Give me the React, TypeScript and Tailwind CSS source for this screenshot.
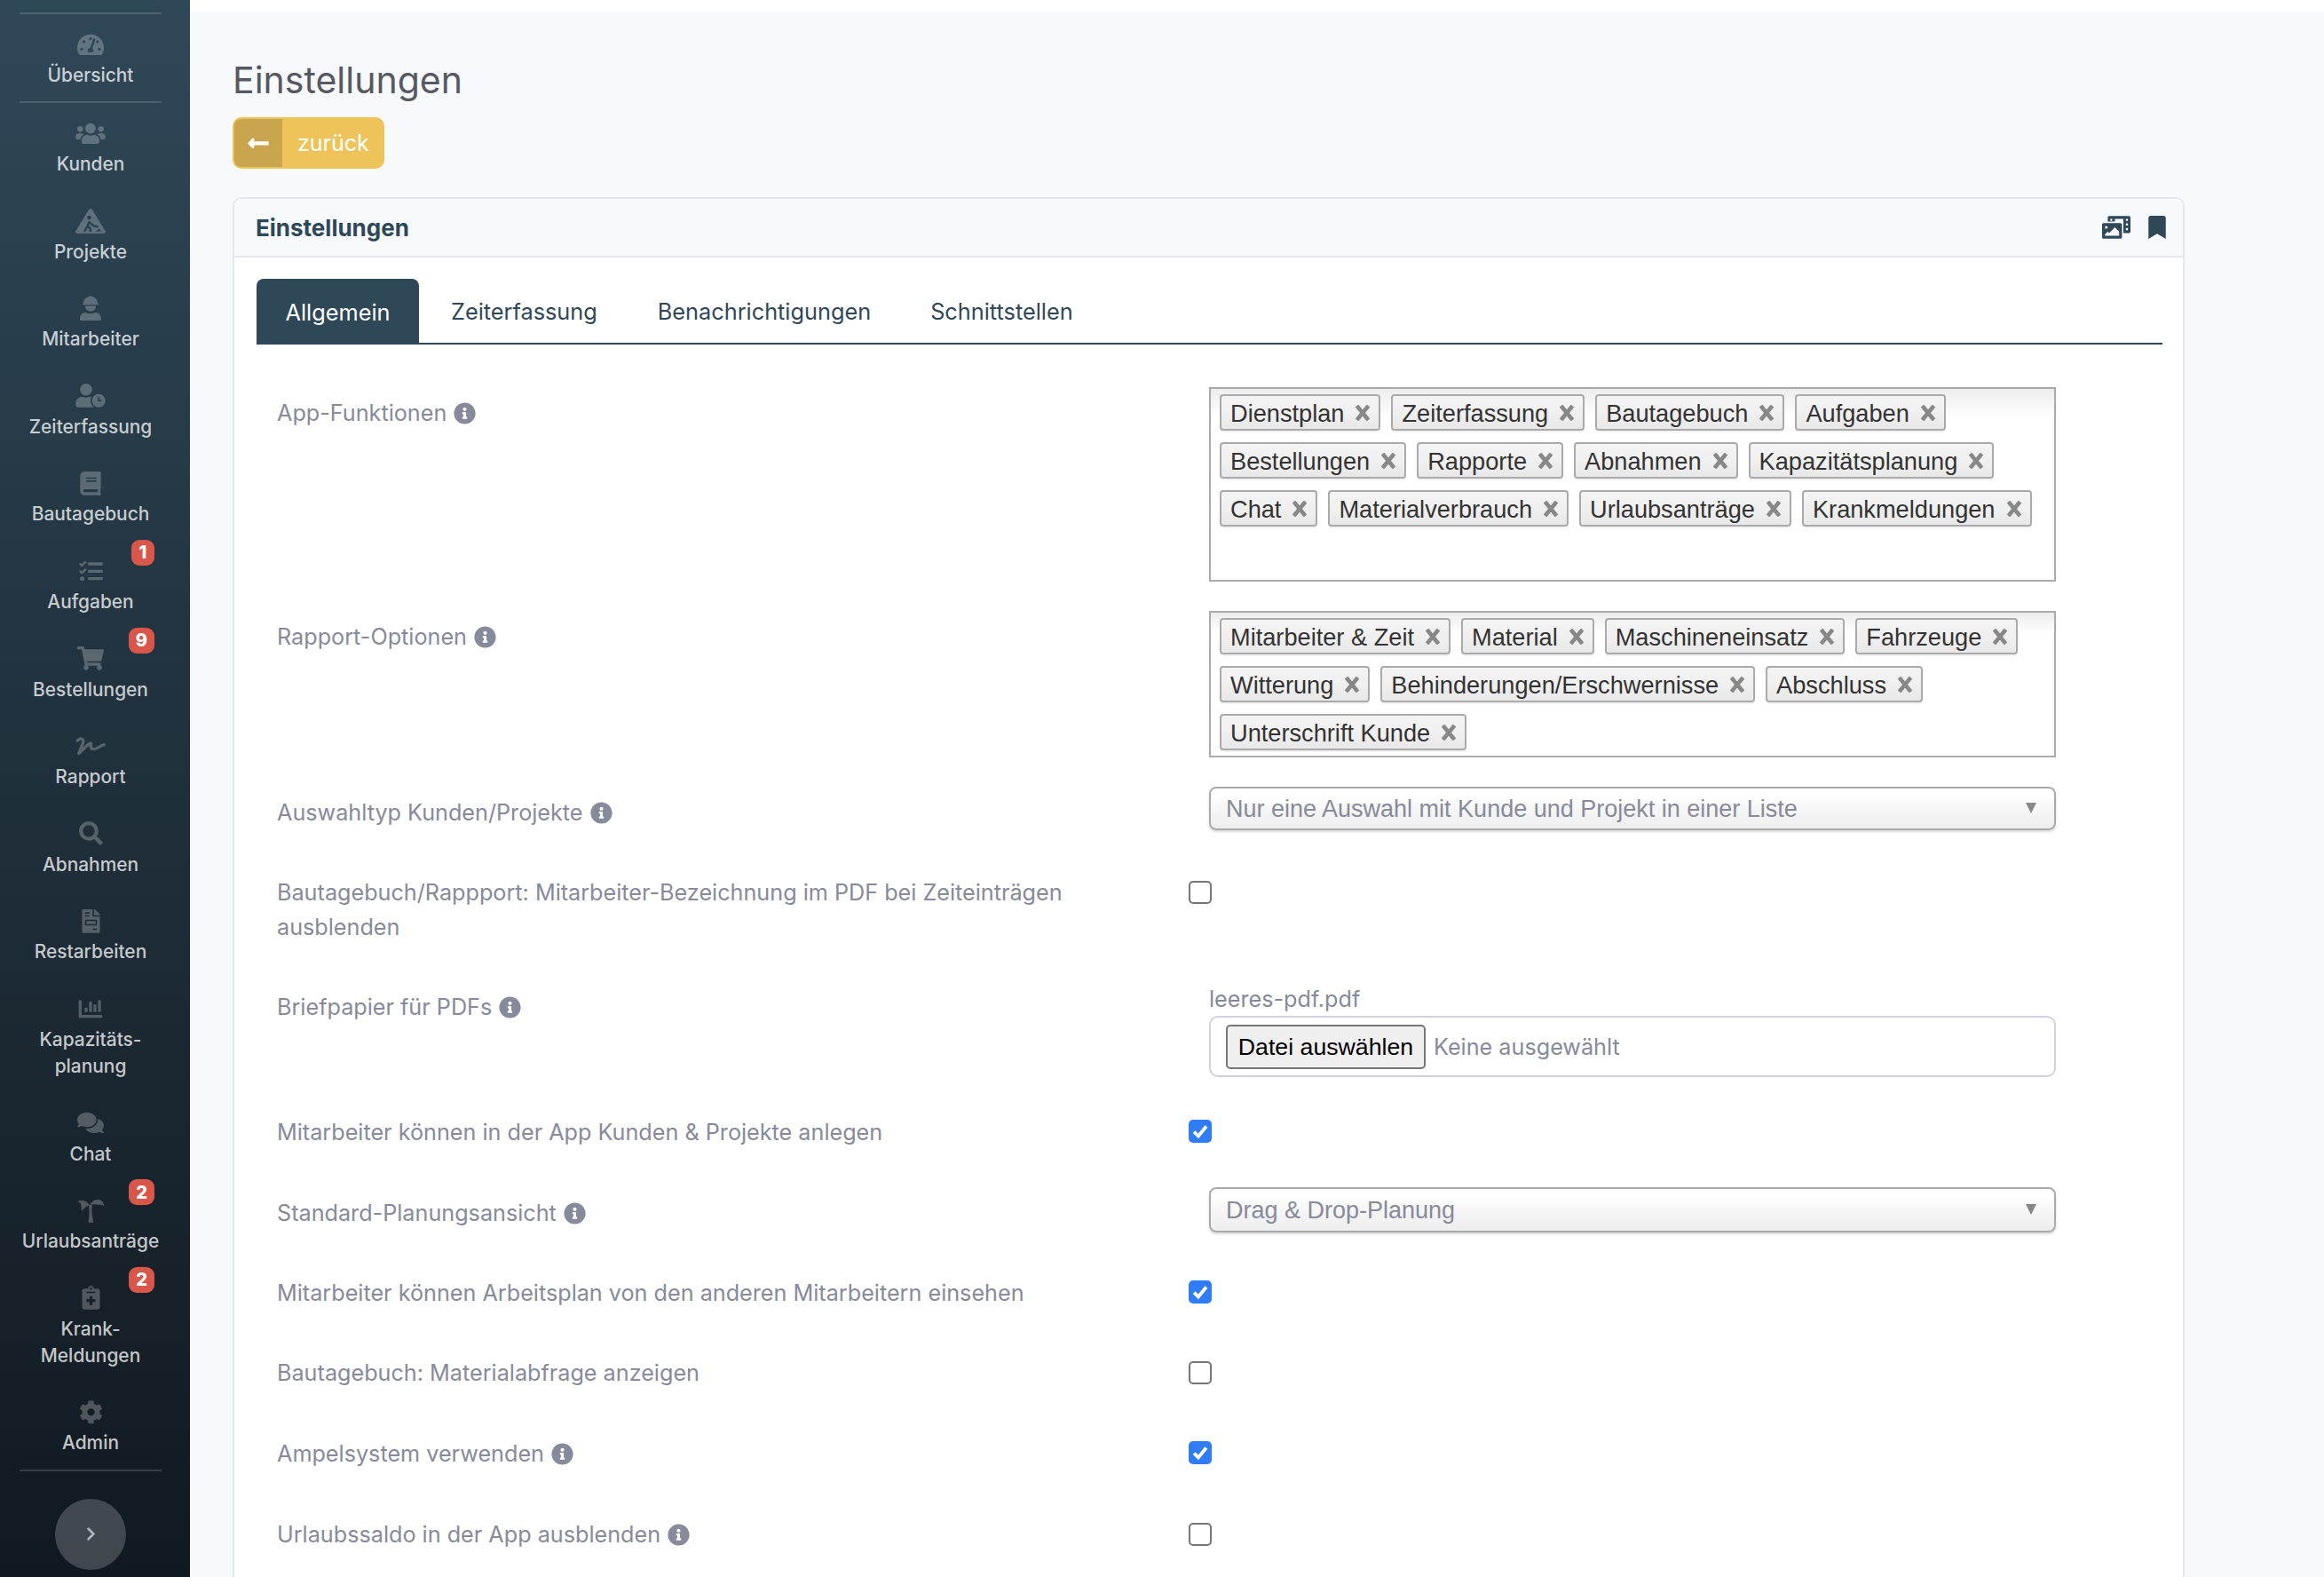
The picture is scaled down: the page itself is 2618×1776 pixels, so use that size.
import React from "react";
import {
  FaTachometerAlt, FaUsers, FaUserClock, FaBook, FaTasks, FaShoppingCart, FaSignature, FaSearch,
  FaFileInvoice, FaChartBar, FaComments, FaNotesMedical, FaCog, FaChevronRight, FaLongArrowAltLeft,
  FaPhotoVideo, FaBookmark, FaInfoCircle,
} from "react-icons/fa";

function DigIcon() {
  return (
    <svg viewBox="0 0 34 28" className="h-[28px] w-[34px]">
      <mask id="dig">
        <path d="M17 0c.8 0 1.400.4 1.800 1L33.600 25c.9 1.400-.1 3-1.700 3H2.100C.5 28-.5 26.400.4 25L15.200 1c.4-.6 1-1 1.800-1z" fill="white" />
        <circle cx="15.500" cy="10" r="2.300" fill="black" />
        <path d="M16 14l-2.500 5.500 3 2.500.5 4M13.500 19.500l-3.500 6.500M15.500 15l5 4.500 5 1" fill="none" stroke="black" strokeWidth="2.300" />
        <path d="M23 25.500l3.500-3 3 3z" fill="black" />
      </mask>
      <rect width="34" height="28" fill="currentColor" mask="url(#dig)" />
    </svg>
  );
}
function WorkerIcon() {
  return (
    <svg viewBox="0 0 24 28" className="h-[28px] w-[24px]" fill="currentColor">
      <path d="M4 8.500C4 4.500 7 2 10 1.300V.6h4v.7C17 2 20 4.500 20 8.500z" />
      <rect x="3" y="8.500" width="18" height="1.800" rx=".9" />
      <path d="M6 11.500h12c0 3.500-2.600 6-6 6s-6-2.500-6-6z" />
      <path d="M6.500 19c1.500.8 3.500 1.300 5.500 1.300s4-.5 5.500-1.300c4 0 6.500 3 6.500 6.500v1.300c0 .7-.5 1.200-1.200 1.200H1.200C.5 28 0 27.500 0 26.800V25.500C0 22 2.500 19 6.500 19z" />
    </svg>
  );
}
function PalmIcon() {
  return (
    <svg viewBox="0 0 30 28" className="h-[28px] w-[30px]" fill="currentColor">
      <path d="M14 8C11 3.500 6 1.500 0 4c2 .5 3.500 1.500 4 3 .5 2.500.5 5 1 8 2.500-3.500 5.500-5.500 9-7z" />
      <path d="M15 7c2-4.500 8-6.500 12-4 2 1.500 3 4 3 6-2-1-4-1.400-6-1-3-1-6-1-9 0z" />
      <path d="M13 8h4c-1 5-.5 12 1 18 .2 1.200-.5 2-1.500 2H14c-1 0-1.500-.8-1.300-2 .8-6 1.100-12 .3-18z" />
    </svg>
  );
}

const ic = "h-[26.7px] shrink-0";

type Item = { label: React.ReactNode; icon: React.ReactNode; badge?: string; tall?: boolean };
const items: Item[] = [
  { label: "Kunden", icon: <FaUsers className={`${ic} w-[34px]`} /> },
  { label: "Projekte", icon: <DigIcon /> },
  { label: "Mitarbeiter", icon: <WorkerIcon /> },
  { label: "Zeiterfassung", icon: <FaUserClock className={`${ic} w-[34px]`} /> },
  { label: "Bautagebuch", icon: <FaBook className={`${ic} w-[24px]`} /> },
  { label: "Aufgaben", icon: <FaTasks className={`${ic} w-[27px]`} />, badge: "1" },
  { label: "Bestellungen", icon: <FaShoppingCart className={`${ic} w-[30px]`} />, badge: "9" },
  { label: "Rapport", icon: <FaSignature className={`${ic} w-[34px]`} /> },
  { label: "Abnahmen", icon: <FaSearch className={`${ic} w-[27px]`} /> },
  { label: "Restarbeiten", icon: <FaFileInvoice className={`${ic} w-[21px]`} /> },
  { label: <>Kapazitäts-<br />planung</>, icon: <FaChartBar className={`${ic} w-[28px]`} />, tall: true },
  { label: "Chat", icon: <FaComments className={`${ic} w-[32px]`} /> },
  { label: "Urlaubsanträge", icon: <PalmIcon />, badge: "2" },
  { label: <>Krank-<br />Meldungen</>, icon: <FaNotesMedical className={`${ic} w-[21px]`} />, badge: "2", tall: true },
  { label: "Admin", icon: <FaCog className={`${ic} w-[27px]`} /> },
];

function NavItem({ item }: { item: Item }) {
  return (
    <div className={`relative flex flex-col items-center pt-[14px] ${item.tall ? "h-[128.6px]" : "h-[98.6px]"}`}>
      <div className="flex h-[40px] items-center justify-center text-white/25">{item.icon}</div>
      <div className="text-center text-[20.9px] font-medium leading-[30px] text-white/75">{item.label}</div>
      {item.badge && (
        <div className="absolute right-[30px] top-[-1px] flex h-[29px] min-w-[26px] items-center justify-center rounded-[9px] bg-[#d9574a] px-[8px] text-[20px] font-extrabold leading-none text-white">
          {item.badge}
        </div>
      )}
    </div>
  );
}

function Info() {
  return <FaInfoCircle className="ml-[8px] inline-block h-[25px] w-[25px] align-[-4px] text-[#868a9b]" />;
}

function Tag({ children }: { children: React.ReactNode }) {
  return (
    <span className="flex h-[41px] items-center rounded-[4px] border-2 border-[#aaaaaa] bg-linear-to-b from-[#f4f4f4] via-[#f0f0f0] to-[#e8e8e8] pl-[10px] pr-[9px] font-['Liberation_Sans',sans-serif] text-[27.2px] leading-none text-[#333333] shadow-[0_2px_0_rgba(0,0,0,0.05)]">
      <span className="pt-[2px]">{children}</span>
      <svg viewBox="0 0 18 18" className="ml-[12px] h-[18px] w-[18px] text-[#888888]" fill="none" stroke="currentColor" strokeWidth="4.600">
        <path d="M2.500 1l13 16M15.500 1l-13 16" />
      </svg>
    </span>
  );
}

function Multi({ tags, h }: { tags: string[]; h: string }) {
  return (
    <div className={`flex w-[954px] flex-wrap content-start gap-x-[12px] gap-y-[13px] border-2 border-[#aaaaaa] bg-linear-to-b from-[#eeeeee] from-[1%] to-white to-[15%] py-[6px] pl-[10px] pr-[10px] ${h}`}>
      {tags.map((t) => (
        <Tag key={t}>{t}</Tag>
      ))}
    </div>
  );
}

function Single({ text, h }: { text: string; h: string }) {
  return (
    <div className={`flex w-[954px] items-center justify-between rounded-[8px] border-2 border-[#aaaaaa] bg-linear-to-b from-white from-[20%] via-[#f6f6f6] to-[#eeeeee] pl-[17px] pr-[20px] font-['Liberation_Sans',sans-serif] text-[27px] text-[#868a9b] shadow-[0_2px_3px_rgba(0,0,0,0.15)] ${h}`}>
      <span className="pt-[2px]">{text}</span>
      <svg viewBox="0 0 12 12" className="mb-[2px] h-[12px] w-[12px] text-[#888888]" fill="currentColor">
        <path d="M0 0h12L6 12z" />
      </svg>
    </div>
  );
}

function Check({ on }: { on?: boolean }) {
  return on ? (
    <span className="ml-[-23px] mt-[15px] flex h-[26px] w-[26px] items-center justify-center rounded-[5px] bg-[#2f7cf6]">
      <svg viewBox="0 0 16 16" className="h-[22px] w-[22px]" fill="none" stroke="white" strokeWidth="2.800">
        <path d="M3 8.500l3.500 3.500L13 4" />
      </svg>
    </span>
  ) : (
    <span className="ml-[-23px] mt-[16px] block h-[26px] w-[26px] rounded-[5px] border-2 border-[#767676] bg-white" />
  );
}

function Row({ label, info, cls, children }: { label: React.ReactNode; info?: boolean; cls: string; children?: React.ReactNode }) {
  return (
    <div className={`flex pl-[23px] ${cls}`}>
      <div className="w-[1050px] shrink-0 pr-[130px] pt-[10px] text-[25.2px] leading-[39px] text-[#868a9b]">
        {label}
        {info && <Info />}
      </div>
      <div>{children}</div>
    </div>
  );
}

const app = ["Dienstplan", "Zeiterfassung", "Bautagebuch", "Aufgaben", "Bestellungen", "Rapporte", "Abnahmen", "Kapazitätsplanung", "Chat", "Materialverbrauch", "Urlaubsanträge", "Krankmeldungen"];
const rapport = ["Mitarbeiter & Zeit", "Material", "Maschineneinsatz", "Fahrzeuge", "Witterung", "Behinderungen/Erschwernisse", "Abschluss", "Unterschrift Kunde"];

export default function App() {
  return (
    <div className="flex h-[1776px] w-[2618px] overflow-hidden bg-white font-['Inter',sans-serif]">
      <aside className="w-[214px] shrink-0 bg-linear-to-b from-[#2f4858] to-[#111920] pr-[10px] pt-[14px]">
        <div className="mx-[22px] h-[2px] bg-white/15" />
        <div className="flex h-[98px] flex-col items-center pt-[14px]">
          <div className="flex h-[40px] items-center justify-center text-white/25">
            <FaTachometerAlt className={`${ic} w-[30px]`} />
          </div>
          <div className="text-[20.9px] font-medium leading-[30px] text-white/75">Übersicht</div>
        </div>
        <div className="mx-[22px] h-[2px] bg-white/15" />
        {items.map((it, i) => (
          <NavItem key={i} item={it} />
        ))}
        <div className="mx-[22px] h-[2px] bg-white/15" />
        <div className="mx-auto mt-[31px] flex h-[80px] w-[80px] items-center justify-center rounded-full bg-white/20 text-white/60">
          <FaChevronRight className="h-[17px] w-[11px]" />
        </div>
      </aside>

      <main className="min-w-0 flex-1 pt-[13px]">
        <div className="h-full bg-[#f8f9fd] pl-[48px] pr-[157px]">
          <h1 className="pt-[51px] text-[41px] font-normal leading-[52px] text-[#575962]">Einstellungen</h1>
          <div className="mt-[16px] flex h-[58px] w-[171px] overflow-hidden rounded-[10px] bg-[#eec35a] text-[25px] text-white">
            <span className="m-[2px] mr-0 flex w-[54px] items-center justify-center rounded-l-[8px] bg-[#c9a54d]">
              <FaLongArrowAltLeft className="h-[26.7px] w-[24px]" />
            </span>
            <span className="flex items-center pl-[17px] pt-[2px]">zurück</span>
          </div>

          <section className="mt-[32px] h-[1600px] rounded-[10px] border-2 border-[#e5e6ef] bg-white">
            <header className="flex h-[66px] items-center justify-between rounded-t-[8px] border-b-2 border-[#e5e6ef] bg-[#f8f9fd] pl-[24px] pr-[19px] text-[#2f4858]">
              <span className="text-[26px] font-bold">Einstellungen</span>
              <span className="flex items-center gap-[20px]">
                <FaPhotoVideo className="h-[26px] w-[32px]" />
                <FaBookmark className="h-[26px] w-[20px]" />
              </span>
            </header>

            <div className="pl-[25px] pr-[23px] pt-[24px]">
              <nav className="flex h-[74px] items-end border-b-2 border-[#2f4858] text-[25.3px] text-[#2f4858]">
                <span className="mb-[-2px] flex h-[74px] w-[183px] items-center justify-center rounded-t-[8px] bg-[#2f4858] pt-[2px] text-white">Allgemein</span>
                <span className="flex h-[72px] items-center pl-[36px] pt-[2px]">Zeiterfassung</span>
                <span className="flex h-[72px] items-center pl-[68px] pt-[2px]">Benachrichtigungen</span>
                <span className="flex h-[72px] items-center pl-[67px] pt-[2px]">Schnittstellen</span>
              </nav>

              <div className="mt-[48px]">
                <Row label="App-Funktionen" info cls="mb-[33px]">
                  <Multi tags={app} h="h-[219px]" />
                </Row>
                <Row label="Rapport-Optionen" info cls="mb-[33px]">
                  <Multi tags={rapport} h="h-[165px]" />
                </Row>
                <Row label="Auswahltyp Kunden/Projekte" info cls="mb-[41px] h-[49px]">
                  <Single text="Nur eine Auswahl mit Kunde und Projekt in einer Liste" h="h-[49px]" />
                </Row>
                <Row label="Bautagebuch/Rappport: Mitarbeiter-Bezeichnung im PDF bei Zeiteinträgen ausblenden" cls="mb-[39px] h-[90px]">
                  <Check />
                </Row>
                <Row label="Briefpapier für PDFs" info cls="mb-[33px]">
                  <div className="h-[39px] text-[25.2px] leading-[40px] text-[#868a9b]">leeres-pdf.pdf</div>
                  <div className="flex h-[69px] w-[954px] items-center rounded-[10px] border-2 border-[#d1d1e0] bg-white pl-[17px]">
                    <span className="flex h-[50px] w-[225px] items-center justify-center rounded-[5px] border-2 border-[#767676] bg-[#efefef] pt-[2px] font-['Liberation_Sans',sans-serif] text-[26.7px] text-black">Datei auswählen</span>
                    <span className="pl-[9px] pt-[2px] text-[25.2px] text-[#868a9b]">Keine ausgewählt</span>
                  </div>
                </Row>
                <Row label="Mitarbeiter können in der App Kunden & Projekte anlegen" cls="mb-[41px] h-[50px]">
                  <Check on />
                </Row>
                <Row label="Standard-Planungsansicht" info cls="mb-[39px] h-[51px]">
                  <Single text="Drag & Drop-Planung" h="h-[51px]" />
                </Row>
                <Row label="Mitarbeiter können Arbeitsplan von den anderen Mitarbeitern einsehen" cls="mb-[40px] h-[50px]">
                  <Check on />
                </Row>
                <Row label="Bautagebuch: Materialabfrage anzeigen" cls="mb-[41px] h-[50px]">
                  <Check />
                </Row>
                <Row label="Ampelsystem verwenden" info cls="mb-[41px] h-[50px]">
                  <Check on />
                </Row>
                <Row label="Urlaubssaldo in der App ausblenden" info cls="h-[50px]">
                  <Check />
                </Row>
              </div>
            </div>
          </section>
        </div>
      </main>
    </div>
  );
}
